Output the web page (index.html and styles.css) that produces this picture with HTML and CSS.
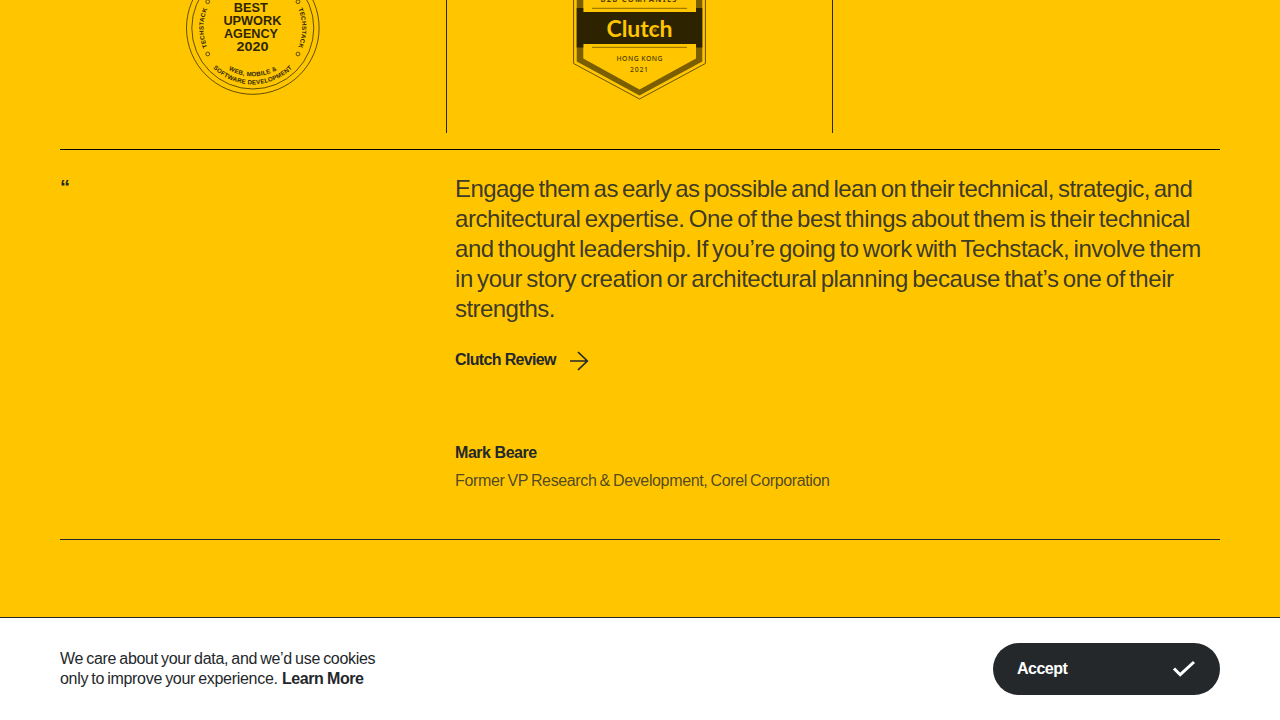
FILE: index.html
```html
<!DOCTYPE html>
<html lang="en">
<head>
<meta charset="utf-8">
<title>Techstack</title>
<link rel="stylesheet" href="styles.css">
</head>
<body>
<main class="content">
  <section class="badges">
    <div class="badge">
      <svg width="136" height="100" viewBox="185 0 136 100" class="upwork">
        <defs>
          <path id="ring" d="M252.8 77.3A49.3 49.3 0 0 1 252.8 -21.3A49.3 49.3 0 0 1 252.8 77.3"/>
          <path id="arc-outer" d="M196.4 28A56.4 56.4 0 0 0 309.2 28"/>
          <path id="arc-inner" d="M204.5 28A48.3 48.3 0 0 0 301.1 28"/>
        </defs>
        <g class="ring">
          <circle cx="252.8" cy="28" r="66.3"/>
          <circle cx="252.8" cy="28" r="61"/>
          <circle cx="207.7" cy="1.7" r="1.9"/>
          <circle cx="207.7" cy="54" r="1.9"/>
          <circle cx="298" cy="1.7" r="1.9"/>
          <circle cx="298" cy="54" r="1.9"/>
        </g>
        <g class="upwork-title">
          <text x="250.8" y="11.8" textLength="34" lengthAdjust="spacingAndGlyphs">BEST</text>
          <text x="252.4" y="25.1" textLength="58" lengthAdjust="spacingAndGlyphs">UPWORK</text>
          <text x="251" y="38.1" textLength="54" lengthAdjust="spacingAndGlyphs">AGENCY</text>
          <text x="252.5" y="51.2" textLength="32" lengthAdjust="spacingAndGlyphs">2020</text>
        </g>
        <g class="arc-text">
          <text><textPath href="#ring" startOffset="25%">TECHSTACK</textPath></text>
          <text><textPath href="#ring" startOffset="75%">TECHSTACK</textPath></text>
          <text><textPath href="#arc-inner" startOffset="50%">WEB, MOBILE &amp;</textPath></text>
          <text><textPath href="#arc-outer" startOffset="50%">SOFTWARE DEVELOPMENT</textPath></text>
        </g>
      </svg>
    </div>
    <div class="badge">
      <svg width="136" height="100" viewBox="572 0 136 100">
        <path d="M573.6 -5V63.5L639.5 99L705.4 63.5V-5" fill="none" stroke="#6b5200" stroke-width="1"/>
        <path d="M576.7 -5V61.5L639.5 95.5L702.3 61.5V-5H696V58.5L639.5 89.5L583.3 58.5V-5Z" fill="#7a5e00"/>
        <path d="M576.7 8H583.3V12H696V8H702.3V47.5H696V44H583.3V47.5H576.7Z" fill="#2d2300"/>
        <path d="M592 8.3H687M592 47.3H687" stroke="#8a6a00" stroke-width="1"/>
        <g class="clutch-text">
          <text x="638.5" y="1.8" textLength="76" class="clutch-small">B2B COMPANIES</text>
          <text x="639.5" y="36.5" textLength="66" class="clutch-name">Clutch</text>
          <text x="639.5" y="61" textLength="46" class="clutch-place">HONG KONG</text>
          <text x="639" y="71.8" textLength="18" class="clutch-place">2021</text>
        </g>
        <circle cx="655" cy="30.3" r="1.7" fill="#8a6a00"/>
      </svg>
    </div>
    <div class="badge"></div>
  </section>
  <section class="review">
    <div class="quote">“</div>
    <div class="review-body">
      <blockquote class="text">
        <span class="line l1">Engage them as early as possible and lean on their technical, strategic, and</span>
        <span class="line l2">architectural expertise. One of the best things about them is their technical</span>
        <span class="line l3">and thought leadership. If you’re going to work with Techstack, involve them</span>
        <span class="line l4">in your story creation or architectural planning because that’s one of their</span>
        <span class="line l5">strengths.</span>
      </blockquote>
      <a class="link"><span class="link-label">Clutch Review</span>
        <svg width="20" height="20" viewBox="0 0 20 20" class="arrow"><path d="M1 10H18.5M9 1L18.3 10L9 19"/></svg>
      </a>
      <div class="author">Mark Beare</div>
      <div class="role">Former VP Research &amp; Development, Corel Corporation</div>
    </div>
  </section>
</main>
<footer class="cookies">
  <p class="cookie-text">
    <span class="line c1">We care about your data, and we’d use cookies</span>
    <span class="line"><span class="c2">only to improve your experience.</span> <b class="c3">Learn More</b></span>
  </p>
  <button class="accept"><span class="accept-label">Accept</span>
    <svg width="24" height="18" viewBox="0 0 24 18" class="check"><path d="M2 8.5L8.2 14.7L22 2"/></svg>
  </button>
</footer>
</body>
</html>
```
FILE: styles.css
```css
* { box-sizing: border-box; }
body {
  margin: 0;
  height: 720px;
  overflow: hidden;
  display: flex;
  flex-direction: column;
  background: #ffc600;
  color: #24282b;
  font: 16px/20px "Liberation Sans", Arial, sans-serif;
}
.content { flex: 1; padding: 0 60px; }
.badges {
  display: grid;
  grid-template-columns: 387px 386px 1fr;
  height: 133px;
}
.badge {
  display: flex;
  justify-content: center;
  align-items: flex-start;
  border-right: 1px solid #24282b;
}
.badge:last-child { border-right: 0; }
.ring { fill: none; stroke: #3a2e00; stroke-width: 0.8; }
.upwork text { text-anchor: middle; font-weight: 700; fill: #2f2600; }
.upwork-title { font-size: 13px; }
.arc-text { font-size: 6.2px; letter-spacing: 0.2px; }
.clutch-text { text-anchor: middle; fill: #4d3c00; font-family: "Noto Sans", sans-serif; }
.clutch-small { font-size: 7.5px; font-weight: 700; }
.clutch-name { font: 700 23px Lato, sans-serif; fill: #ffc600; }
.clutch-place { font-size: 6.8px; font-weight: 500; }
.review {
  display: grid;
  grid-template-columns: 395px 1fr;
  height: 391px;
  margin-top: 16px;
  border-top: 1px solid #000;
  border-bottom: 1px solid #24282b;
}
.quote { padding-top: 25px; font-size: 20px; line-height: 24px; font-weight: 700; }
.review-body { padding-top: 24px; }
.text { margin: 0; font-size: 24px; line-height: 30px; word-spacing: -2px; color: rgba(36, 40, 43, 0.9); }
.line { display: block; white-space: nowrap; }
.l1 { letter-spacing: -0.57px; }
.l2 { letter-spacing: -0.41px; }
.l3 { letter-spacing: -0.46px; }
.l4 { letter-spacing: -0.43px; }
.l5 { letter-spacing: -0.55px; }
.link { display: flex; align-items: center; gap: 13px; margin-top: 25px; height: 22px; }
.link-label { width: 101px; font-weight: 700; letter-spacing: -0.65px; white-space: nowrap; }
.arrow { margin-top: 2px; fill: none; stroke: #24282b; stroke-width: 1.7; }
.author { margin-top: 72px; font-weight: 700; letter-spacing: -0.45px; }
.role { margin-top: 8px; letter-spacing: -0.36px; word-spacing: -1px; color: rgba(36, 40, 43, 0.8); }
.cookies {
  display: flex;
  justify-content: space-between;
  align-items: center;
  height: 103px;
  padding: 0 60px;
  background: #fff;
  border-top: 1px solid #24282b;
}
.cookie-text { margin: 0; }
.c1, .c2 { letter-spacing: -0.3px; word-spacing: -1px; }
.c3 { letter-spacing: -0.5px; }
.accept {
  display: flex;
  justify-content: space-between;
  align-items: center;
  width: 227px;
  height: 52px;
  padding: 0 24px;
  border: 0;
  border-radius: 26px;
  background: #24282b;
  color: #fff;
  font: 700 16px/20px "Liberation Sans", Arial, sans-serif;
}
.accept-label { letter-spacing: -0.5px; }
.check { fill: none; stroke: #fff; stroke-width: 3; }
```
